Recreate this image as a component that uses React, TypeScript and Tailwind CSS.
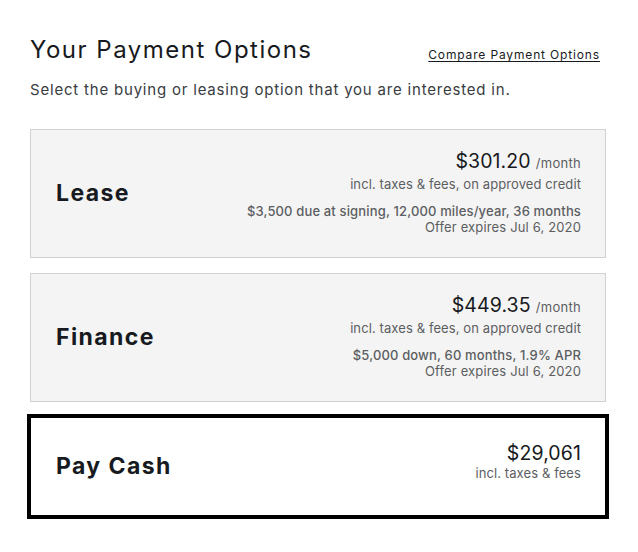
import React from "react";

const font = { fontFamily: "Inter, 'Noto Sans', sans-serif" };

function Card({
  title,
  price,
  unit,
  note,
  detail,
  expires,
}: {
  title: string;
  price: string;
  unit?: string;
  note: string;
  detail?: string;
  expires?: string;
}) {
  return (
    <div className="flex h-[129px] items-center justify-between border border-[#d0d1d2] bg-[#f4f4f4] pl-[25px] pr-[24px]">
      <div className="text-[23px] font-bold text-[#171a20] tracking-[1.4px]">{title}</div>
      <div className="flex flex-col items-end text-right">
        <div className="flex items-baseline gap-[5px] leading-none">
          <span className="text-[19.5px] text-[#171a20] tracking-[0.1px]">{price}</span>
          {unit && <span className="text-[13px] text-[#5c5e62] tracking-[0.3px]">{unit}</span>}
        </div>
        <div className="mt-[4px] text-[13px] leading-[16px] text-[#5c5e62] tracking-[0.1px]">{note}</div>
        {detail && (
          <div className="mt-[11px] text-[13px] font-medium leading-[16px] text-[#5c5e62] tracking-[0.15px]">{detail}</div>
        )}
        {expires && <div className="text-[13px] leading-[16px] text-[#5c5e62] tracking-[0.15px]">{expires}</div>}
      </div>
    </div>
  );
}

export default function App() {
  return (
    <div className="min-h-[552px] w-[638px] bg-white pl-[30px] pr-[32px] pt-[36px]" style={font}>
      <div className="flex items-center justify-between">
        <h1 className="text-[24px] leading-[28px] text-[#171a20] tracking-[1.5px]">Your Payment Options</h1>
        <a className="mr-[6px] mt-[10px] text-[12px] text-[#171a20] underline underline-offset-2 tracking-[0.85px]" href="#">
          Compare Payment Options
        </a>
      </div>
      <p className="mt-[16px] text-[15px] leading-[20px] text-[#393c41] tracking-[0.8px]">
        Select the buying or leasing option that you are interested in.
      </p>
      <div className="mt-[29px] flex flex-col gap-[15px]">
        <Card
          title="Lease"
          price="$301.20"
          unit="/month"
          note="incl. taxes & fees, on approved credit"
          detail="$3,500 due at signing, 12,000 miles/year, 36 months"
          expires="Offer expires Jul 6, 2020"
        />
        <Card
          title="Finance"
          price="$449.35"
          unit="/month"
          note="incl. taxes & fees, on approved credit"
          detail="$5,000 down, 60 months, 1.9% APR"
          expires="Offer expires Jul 6, 2020"
        />
        <div className="-mx-[3px] -mt-[3px] flex h-[105px] items-center justify-between border-4 border-black bg-white pl-[25px] pr-[24px]">
          <div className="text-[23px] font-bold text-[#171a20] tracking-[1.4px]">Pay Cash</div>
          <div className="mb-[8px] flex flex-col items-end text-right">
            <span className="text-[19.5px] leading-none text-[#171a20] tracking-[0.1px]">$29,061</span>
            <span className="mt-[2px] text-[13px] leading-[16px] text-[#5c5e62] tracking-[0.1px]">incl. taxes &amp; fees</span>
          </div>
        </div>
      </div>
    </div>
  );
}
